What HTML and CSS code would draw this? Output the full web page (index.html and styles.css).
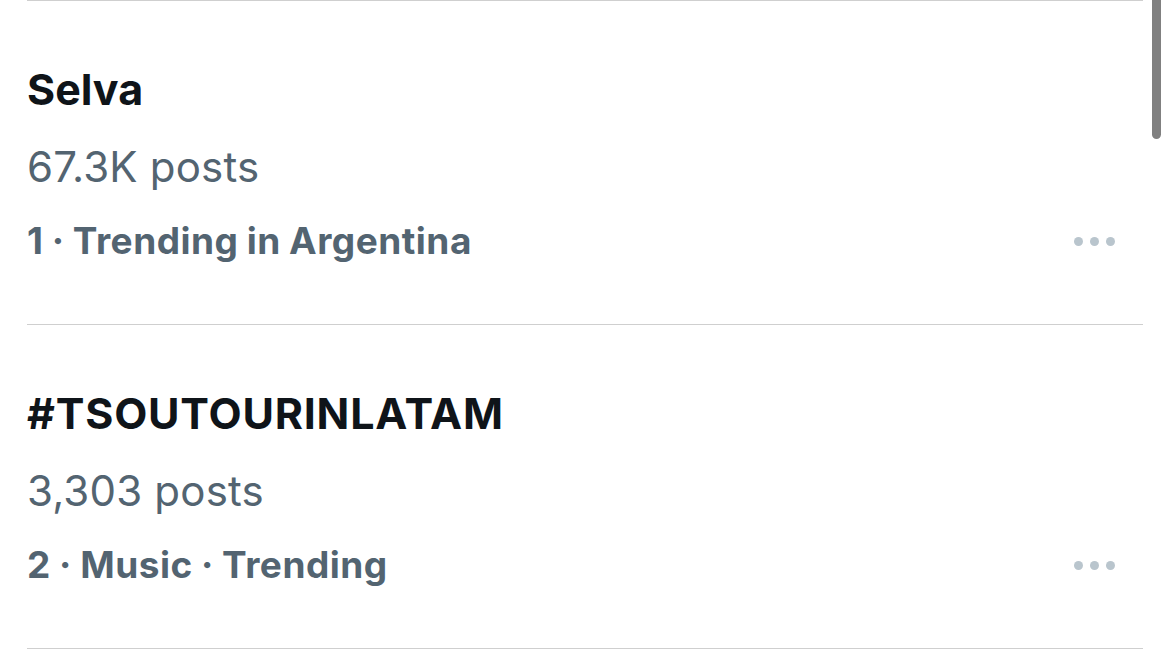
FILE: index.html
```html
<!DOCTYPE html>
<html>
<head>
<meta charset="utf-8">
<link rel="stylesheet" href="styles.css">
</head>
<body>
<div class="page">
  <ul class="trends">
    <li class="trend">
      <div class="title">Selva</div>
      <div class="count">67.3K posts</div>
      <div class="meta-row">
        <div class="meta">1 · Trending in Argentina</div>
        <div class="more"><span></span><span></span><span></span></div>
      </div>
    </li>
    <li class="trend">
      <div class="title title-tag">#TSOUTOURINLATAM</div>
      <div class="count">3,303 posts</div>
      <div class="meta-row">
        <div class="meta">2 · Music · Trending</div>
        <div class="more"><span></span><span></span><span></span></div>
      </div>
    </li>
  </ul>
  <div class="scrollbar"></div>
</div>
</body>
</html>
```
FILE: styles.css
```css
html, body {
  margin: 0;
  padding: 0;
  background: #ffffff;
}
body {
  font-family: "Inter", "Liberation Sans", sans-serif;
  width: 1169px;
  height: 658px;
  overflow: hidden;
}
.page {
  position: relative;
  height: 658px;
}
.trends {
  list-style: none;
  margin: 0 0 0 27px;
  padding: 0;
  width: 1116px;
  border-top: 1px solid #cfcfcf;
}
.trend {
  height: 324px;
  border-bottom: 1px solid #cfcfcf;
  display: flex;
  flex-direction: column;
  padding-top: 64px;
  box-sizing: border-box;
}
.title {
  font-size: 43px;
  font-weight: 700;
  color: #0f1419;
  line-height: 48px;
  letter-spacing: 0;
}
.title-tag {
  letter-spacing: 0.8px;
}
.count {
  font-size: 42px;
  font-weight: 400;
  color: #536471;
  line-height: 48px;
  margin-top: 30px;
  letter-spacing: 0.2px;
}
.meta-row {
  display: flex;
  align-items: center;
  justify-content: space-between;
  margin-top: 28px;
  padding-right: 28px;
}
.meta {
  font-size: 37px;
  font-weight: 700;
  color: #536471;
  line-height: 44px;
  letter-spacing: 0.5px;
  word-spacing: -1px;
}
.more {
  display: flex;
  gap: 7px;
}
.more span {
  width: 9px;
  height: 9px;
  border-radius: 50%;
  background: #b9c5cd;
}
.scrollbar {
  position: absolute;
  top: 0;
  left: 1152px;
  width: 9px;
  height: 139px;
  background: #808080;
  border-radius: 0 0 5px 5px;
}
```
